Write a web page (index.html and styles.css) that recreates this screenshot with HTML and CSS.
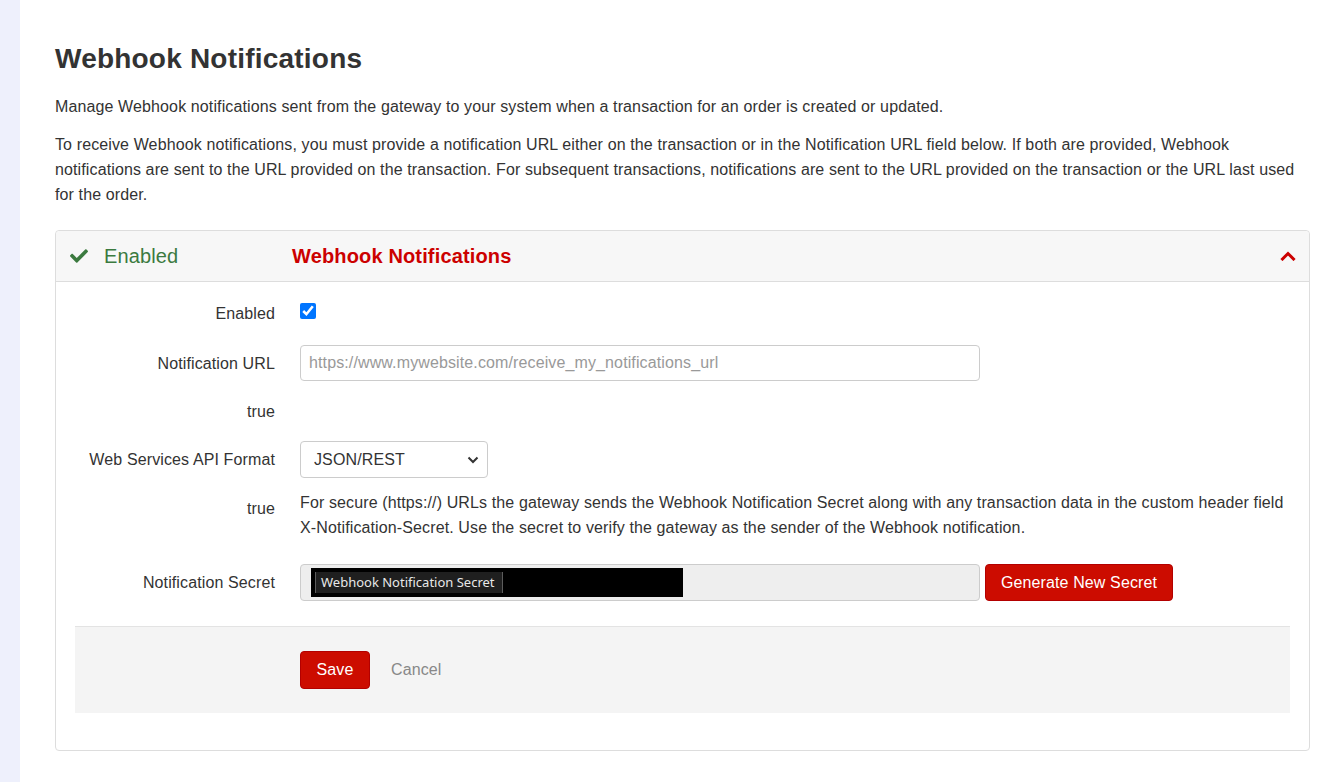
FILE: index.html
```html
<!DOCTYPE html>
<html lang="en">
<head>
<meta charset="utf-8">
<title>Webhook Notifications</title>
<link rel="stylesheet" href="styles.css">
</head>
<body>
<div class="layout">
  <aside class="sidebar"></aside>
  <main class="main">
    <h1 class="page-title">Webhook Notifications</h1>
    <p class="intro">Manage Webhook notifications sent from the gateway to your system when a transaction for an order is created or updated.</p>
    <p class="intro intro-last">To receive Webhook notifications, you must provide a notification URL either on the transaction or in the Notification URL field below. If both are provided, Webhook notifications are sent to the URL provided on the transaction. For subsequent transactions, notifications are sent to the URL provided on the transaction or the URL last used for the order.</p>

    <section class="panel">
      <header class="panel-header">
        <div class="status">
          <svg class="check-icon" viewBox="0 67 512 378" width="18" height="14" aria-hidden="true"><path fill="#3b7a3f" d="M173.898 439.404l-166.4-166.4c-9.997-9.997-9.997-26.206 0-36.204l36.203-36.204c9.997-9.998 26.207-9.998 36.204 0L192 312.69 432.095 72.596c9.997-9.997 26.207-9.997 36.204 0l36.203 36.204c9.997 9.997 9.997 26.206 0 36.204l-294.4 294.401c-9.998 9.997-26.207 9.997-36.204-.001z"/></svg>
          <span class="status-text">Enabled</span>
        </div>
        <h2 class="panel-title">Webhook Notifications</h2>
        <svg class="chevron" viewBox="0 0 16 10" width="16" height="10" aria-hidden="true"><polyline points="2.5,8 8,2.5 13.5,8" fill="none" stroke="#cc0000" stroke-width="3" stroke-linejoin="miter" stroke-linecap="square"/></svg>
      </header>

      <div class="panel-body">
        <div class="form-row row-first">
          <label class="form-label label-first">Enabled</label>
          <div class="form-control-cell center">
            <input type="checkbox" class="checkbox" checked>
          </div>
        </div>

        <div class="form-row">
          <label class="form-label">Notification URL</label>
          <div class="form-control-cell">
            <input type="text" class="text-input" placeholder="https://www.mywebsite.com/receive_my_notifications_url">
          </div>
        </div>

        <div class="form-row">
          <label class="form-label">true</label>
          <div class="form-control-cell"></div>
        </div>

        <div class="form-row">
          <label class="form-label">Web Services API Format</label>
          <div class="form-control-cell">
            <div class="select-wrap">
              <select class="select">
                <option>JSON/REST</option>
              </select>
              <svg class="select-arrow" viewBox="0 0 12 8" width="12" height="8" aria-hidden="true"><polyline points="1.5,1.5 6,6 10.5,1.5" fill="none" stroke="#333" stroke-width="2"/></svg>
            </div>
          </div>
        </div>

        <div class="form-row row-desc">
          <label class="form-label">true</label>
          <div class="form-control-cell">
            <p class="help-text">For secure (https://) URLs the gateway sends the Webhook Notification Secret along with any transaction data in the custom header field X-Notification-Secret. Use the secret to verify the gateway as the sender of the Webhook notification.</p>
          </div>
        </div>

        <div class="form-row row-secret">
          <label class="form-label">Notification Secret</label>
          <div class="form-control-cell secret-cell">
            <div class="secret-field">
              <div class="redacted">
                <span class="secret-tag">Webhook Notification Secret</span>
              </div>
            </div>
            <button class="btn btn-red btn-generate" type="button">Generate New Secret</button>
          </div>
        </div>

        <div class="form-footer">
          <button class="btn btn-red btn-save" type="button">Save</button>
          <button class="btn-link" type="button">Cancel</button>
        </div>
      </div>
    </section>
  </main>
</div>
</body>
</html>
```

FILE: styles.css
```css
* { box-sizing: border-box; }

html, body {
  margin: 0;
  padding: 0;
  background: #ffffff;
  font-family: "Liberation Sans", Arial, sans-serif;
  color: #333333;
}

.layout {
  display: flex;
  min-height: 782px;
}

.sidebar {
  width: 20px;
  flex: 0 0 20px;
  background: #eef0fc;
}

.main {
  flex: 1;
  padding: 42px 33px 0 35px;
}

.page-title {
  margin: 0 0 18px;
  font-size: 28px;
  line-height: 34px;
  font-weight: bold;
  letter-spacing: 0.21px;
  color: #333333;
}

.intro {
  margin: 0 0 13px;
  font-size: 16px;
  line-height: 25px;
  letter-spacing: 0.12px;
}

.intro-last {
  margin-bottom: 23px;
}

.panel {
  border: 1px solid #dddddd;
  border-radius: 4px;
  background: #ffffff;
}

.panel-header {
  display: flex;
  align-items: center;
  height: 51px;
  padding: 0 13px 0 14px;
  background: #f7f7f7;
  border-bottom: 1px solid #dddddd;
  border-radius: 4px 4px 0 0;
}

.status {
  display: flex;
  align-items: center;
  width: 222px;
  flex: 0 0 222px;
}

.check-icon {
  display: block;
  margin-right: 16px;
}

.status-text {
  font-size: 20px;
  letter-spacing: 0.12px;
  color: #3b7a3f;
}

.panel-title {
  flex: 1;
  margin: 0;
  font-size: 20px;
  font-weight: bold;
  letter-spacing: 0.15px;
  color: #cc0000;
}

.chevron {
  display: block;
}

.panel-body {
  padding: 12px 19px 37px;
}

.form-row {
  display: grid;
  grid-template-columns: 200px 1fr;
  column-gap: 25px;
  min-height: 36px;
  margin-bottom: 12px;
}

.row-first {
  margin-bottom: 15px;
}

.row-desc {
  margin-bottom: 24px;
}

.row-secret {
  margin-bottom: 0;
}

.form-label {
  text-align: right;
  font-size: 16px;
  line-height: 24px;
  padding-top: 7px;
  letter-spacing: 0.12px;
  color: #333333;
}

.label-first {
  padding-top: 8px;
}

.form-control-cell {
  display: flex;
  align-items: flex-start;
}

.form-control-cell.center {
  align-items: center;
}

.checkbox {
  width: 16px;
  height: 16px;
  margin: 0 0 2px;
  accent-color: #0075ff;
}

.text-input {
  width: 680px;
  height: 36px;
  padding: 0 8px;
  border: 1px solid #cccccc;
  border-radius: 4px;
  font-family: "Liberation Sans", Arial, sans-serif;
  font-size: 16px;
  letter-spacing: 0.12px;
  color: #333333;
  background: #ffffff;
}

.text-input::placeholder {
  color: #999999;
}

.select-wrap {
  position: relative;
  width: 188px;
}

.select {
  appearance: none;
  -webkit-appearance: none;
  width: 188px;
  height: 37px;
  padding: 0 30px 0 13px;
  border: 1px solid #cccccc;
  border-radius: 4px;
  background: #ffffff;
  font-family: "Liberation Sans", Arial, sans-serif;
  font-size: 16px;
  letter-spacing: 0.12px;
  color: #333333;
}

.select-arrow {
  position: absolute;
  right: 9px;
  top: 15px;
  pointer-events: none;
}

.help-text {
  margin: 0;
  font-size: 16px;
  line-height: 25px;
  letter-spacing: 0.12px;
  color: #333333;
}

.secret-cell {
  align-items: center;
}

.secret-field {
  display: flex;
  align-items: center;
  width: 680px;
  height: 37px;
  padding: 0 0 0 10px;
  border: 1px solid #cccccc;
  border-radius: 4px;
  background: #eeeeee;
}

.redacted {
  display: flex;
  align-items: center;
  width: 372px;
  height: 29px;
  background: #000000;
  padding-left: 4px;
}

.secret-tag {
  display: inline-block;
  height: 21px;
  padding: 0 7px 0 5px;
  background: #1f1f1f;
  border-left: 1px solid #5c5c5c;
  border-right: 1px solid #5c5c5c;
  font-family: "Noto Sans", "Open Sans", sans-serif;
  font-size: 13px;
  line-height: 21px;
  color: #e8e8e8;
}

.btn {
  font-family: "Liberation Sans", Arial, sans-serif;
  font-size: 16px;
  letter-spacing: 0.12px;
  cursor: pointer;
}

.btn-red {
  background: #cc0c00;
  color: #ffffff;
  border: 1px solid #b30000;
  border-radius: 4px;
}

.btn-generate {
  margin-left: 5px;
  width: 188px;
  height: 37px;
  padding: 0;
}

.form-footer {
  display: flex;
  align-items: center;
  margin-top: 25px;
  padding: 24px 0 24px 225px;
  border-top: 1px solid #e3e3e3;
  background: #f4f4f4;
}

.btn-save {
  width: 70px;
  height: 38px;
  padding: 0;
}

.btn-link {
  margin-left: 21px;
  padding: 0;
  border: 0;
  background: none;
  font-family: "Liberation Sans", Arial, sans-serif;
  font-size: 16px;
  letter-spacing: 0.12px;
  color: #888888;
}
```
